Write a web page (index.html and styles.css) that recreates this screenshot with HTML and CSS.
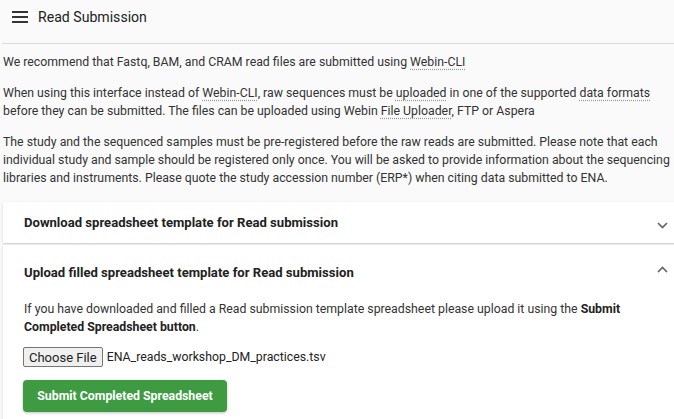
FILE: index.html
```html
<!DOCTYPE html>
<html>
<head>
<meta charset="utf-8">
<link rel="stylesheet" href="styles.css">
</head>
<body>
<header class="topbar">
  <svg class="menu-icon" width="16" height="12" viewBox="0 0 16 12"><rect x="0" y="0" width="16" height="2" fill="#333"/><rect x="0" y="5" width="16" height="2" fill="#333"/><rect x="0" y="10" width="16" height="2" fill="#333"/></svg>
  <span class="title">Read Submission</span>
</header>
<main class="content">
  <p class="intro">We recommend that Fastq, BAM, and CRAM read files are submitted using <span class="link">Webin-CLI</span></p>
  <p class="intro">When using this interface instead of <span class="link">Webin-CLI</span>, raw sequences must be <span class="link">uploaded</span> in one of the supported <span class="link">data formats</span> before they can be submitted. The files can be uploaded using Webin <span class="link">File Uploader</span>, FTP or Aspera</p>
  <p class="intro">The study and the sequenced samples must be pre-registered before the raw reads are submitted. Please note that each individual study and sample should be registered only once. You will be asked to provide information about the sequencing libraries and instruments. Please quote the study accession number (ERP*) when citing data submitted to ENA.</p>

  <section class="panel">
    <div class="panel-head first">
      <span class="panel-title">Download spreadsheet template for Read submission</span>
      <svg class="chev" width="11" height="7" viewBox="0 0 11 7"><path d="M1 1 L5.5 5.5 L10 1" fill="none" stroke="#666" stroke-width="1.7"/></svg>
    </div>
  </section>
  <section class="panel">
    <div class="panel-head second">
      <span class="panel-title">Upload filled spreadsheet template for Read submission</span>
      <svg class="chev" width="11" height="7" viewBox="0 0 11 7"><path d="M1 6 L5.5 1.5 L10 6" fill="none" stroke="#666" stroke-width="1.7"/></svg>
    </div>
    <div class="panel-body">
      <p class="body-text">If you have downloaded and filled a Read submission template spreadsheet please upload it using the <b>Submit Completed Spreadsheet button</b>.</p>
      <div class="file-row">
        <button class="file-btn" type="button">Choose File</button>
        <span class="file-name">ENA_reads_workshop_DM_practices.tsv</span>
      </div>
      <button class="submit-btn" type="button">Submit Completed Spreadsheet</button>
    </div>
  </section>
</main>
</body>
</html>
```
FILE: styles.css
```css
html, body {
  margin: 0;
  padding: 0;
  background: #fafafa;
  font-family: Roboto, "Liberation Sans", Arial, sans-serif;
  color: #333;
  overflow: hidden;
}
.topbar {
  height: 44px;
  box-sizing: border-box;
  display: flex;
  align-items: flex-start;
  padding: 11px 0 0 12px;
  border-bottom: 1px solid #dcdcdc;
  margin-left: 2px;
}
.menu-icon {
  margin-left: -2px;
  margin-right: 10px;
}
.title {
  font-size: 14.1px;
  line-height: 14px;
  color: #222;
  margin-top: -1px;
}
.content {
  padding-left: 3px;
  width: 690px;
}
.intro {
  font-size: 12.3px;
  line-height: 18px;
  margin: 9px 0 13px 0;
  width: 672px;
}
.intro + .intro {
  margin-top: 13px;
}
.link {
  text-decoration: underline dotted #999;
  text-underline-offset: 3px;
}
.panel {
  background: #fff;
  box-shadow: 0 1px 3px rgba(0,0,0,0.12), 0 1px 1px rgba(0,0,0,0.06);
  margin-bottom: 2px;
}
.panel:first-of-type {
  margin-top: 15px;
}
.panel-head {
  display: flex;
  align-items: center;
  justify-content: space-between;
  padding: 0 21px 0 21px;
  width: 644px;
}
.panel-head.first { height: 41px; }
.panel-head.second { height: 54px; }
.panel-title {
  font-size: 13.1px;
  font-weight: 700;
  color: #222;
}
.chev { margin-top: 5px; }
.panel-head.second .chev { margin-top: -5px; }
.panel-body {
  padding: 1px 21px 8px 21px;
}
.body-text {
  font-size: 12.3px;
  line-height: 18px;
  margin: 0 0 11px 0;
  width: 620px;
}
.body-text b { color: #222; }
.file-row {
  display: flex;
  align-items: center;
  gap: 4px;
  margin-bottom: 13px;
}
.file-btn {
  font-family: Roboto, "Liberation Sans", Arial, sans-serif;
  font-size: 13px;
  height: 20px;
  padding: 0 5px;
  border: 1px solid #767676;
  border-radius: 2px;
  background: #efefef;
  color: #222;
  margin-left: -1px;
}
.file-name {
  font-size: 12.3px;
  color: #222;
}
.submit-btn {
  font-family: Roboto, "Liberation Sans", Arial, sans-serif;
  font-size: 12.3px;
  font-weight: 700;
  color: #fff;
  background: #3e9b42;
  border: none;
  border-radius: 4px;
  height: 32px;
  width: 204px;
  margin-left: -1px;
  box-shadow: 0 1px 3px rgba(0,0,0,0.25);
}
```
